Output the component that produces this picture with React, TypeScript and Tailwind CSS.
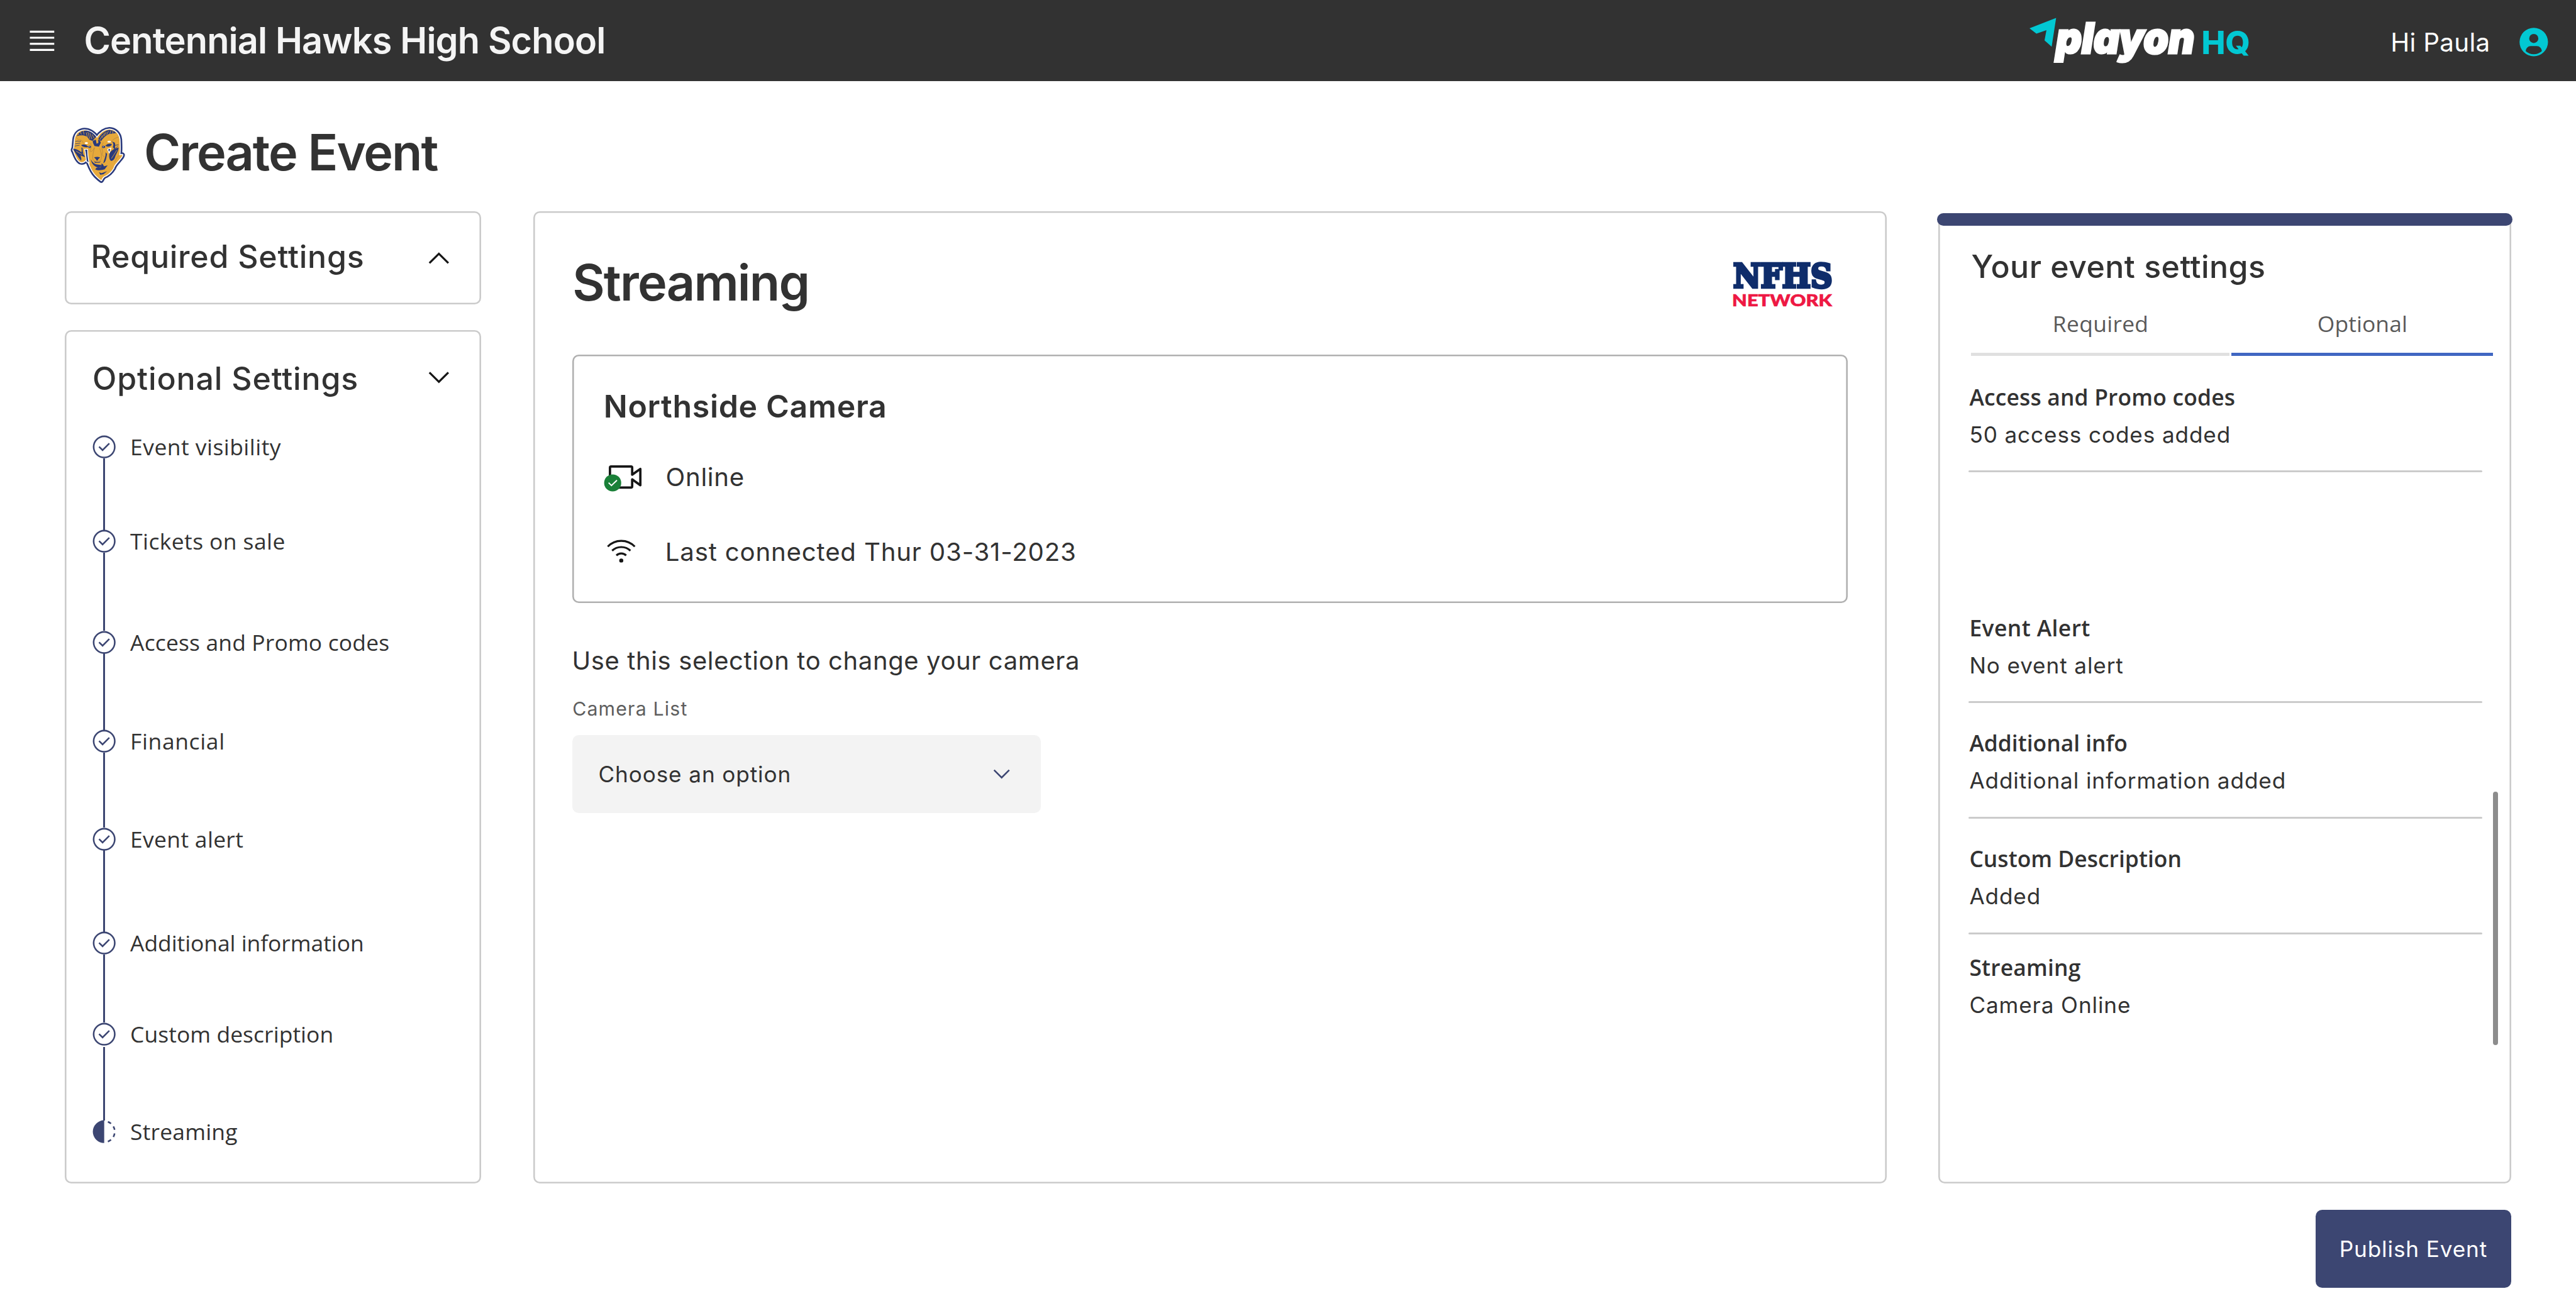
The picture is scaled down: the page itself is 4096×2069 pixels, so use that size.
import type { ReactNode } from 'react';

const INTER = "font-['Inter',sans-serif]";
const OPEN = "font-['Open_Sans',sans-serif]";

function Icon({ className, children }: { className: string; children: ReactNode }) {
  return (
    <svg viewBox="0 0 32 32" fill="currentColor" className={`shrink-0 ${className}`} aria-hidden="true">
      {children}
    </svg>
  );
}

const MenuIcon = () => (
  <Icon className="size-5 text-white">
    <path d="M4 6h24v2H4zM4 12h24v2H4zM4 18h24v2H4zM4 24h24v2H4z" />
  </Icon>
);

const ChevronDown = ({ className }: { className: string }) => (
  <Icon className={className}>
    <path d="M16 22L6 12 7.4 10.6 16 19.2 24.6 10.6 26 12z" />
  </Icon>
);

const ChevronUp = ({ className }: { className: string }) => (
  <Icon className={className}>
    <path d="M16 10L26 20 24.6 21.4 16 12.8 7.4 21.4 6 20z" />
  </Icon>
);

const AvatarIcon = () => (
  <Icon className="size-5 text-[#02c8d3]">
    <path
      fillRule="evenodd"
      d="M16 2a14 14 0 1 0 0 28a14 14 0 0 0 0-28zM16 8a4.5 4.5 0 1 1 0 9a4.5 4.5 0 0 1 0-9zM8.007 24.93A4.996 4.996 0 0 1 13 20h6a4.996 4.996 0 0 1 4.993 4.93a11.94 11.94 0 0 1-15.986 0z"
    />
  </Icon>
);

const CheckOutline = () => (
  <Icon className="size-4 text-[#3c4672]">
    <path d="M14 21.414L9 16.413 10.413 15 14 18.586 21.585 11 23 12.415z" />
    <path d="M16 2a14 14 0 1 0 14 14A14 14 0 0 0 16 2zm0 26a12 12 0 1 1 12-12a12 12 0 0 1-12 12z" />
  </Icon>
);

const Incomplete = () => (
  <Icon className="size-4 text-[#3c4672]">
    <path d="M23.764 6.859l1.285-1.531a13.976 13.976 0 0 0-4.182-2.441l-.683 1.878a11.973 11.973 0 0 1 3.58 2.094zM27.81 14l1.968-.413a13.889 13.889 0 0 0-1.638-4.541L26.409 10a12.52 12.52 0 0 1 1.401 4zM20.184 27.235l.683 1.878a13.976 13.976 0 0 0 4.182-2.441l-1.285-1.531a11.973 11.973 0 0 1-3.58 2.094zM26.409 22L28.14 23a14.139 14.139 0 0 0 1.638-4.587l-1.968-.347A12.152 12.152 0 0 1 26.409 22zM16 30V2a14 14 0 0 0 0 28z" />
  </Icon>
);

const WifiIcon = () => (
  <Icon className="ml-px size-5 text-[#161616]">
    <circle cx="16" cy="25" r="2" />
    <g fill="none" stroke="currentColor" strokeWidth="2">
      <path d="M2.7 11.3a18.4 18.4 0 0 1 26.6 0" />
      <path d="M7 15.3a13.2 13.2 0 0 1 18 0" />
      <path d="M11.2 20a6.9 6.9 0 0 1 9.6 0" />
    </g>
  </Icon>
);

const CameraOnlineIcon = () => (
  <svg viewBox="0 0 100 96" className="h-6 w-[25px] shrink-0" aria-hidden="true">
    <g transform="translate(8.2 7.6) scale(2.875)">
      <path
        fill="#161616"
        d="M21 26H4a2 2 0 0 1-2-2V8a2 2 0 0 1 2-2h17a2 2 0 0 1 2 2v4.06l5.42-3.87A1 1 0 0 1 30 9v14a1 1 0 0 1-1.58.81L23 19.94V24a2 2 0 0 1-2 2zM4 24h17v-6a1 1 0 0 1 1.58-.81L28 21.06V10.94l-5.42 3.87A1 1 0 0 1 21 14V8H4z"
      />
    </g>
    <circle cx="23.5" cy="68" r="21" fill="#1a8038" />
    <path d="M13.5 67.5L20.5 74.5L34 61.5" fill="none" stroke="#fff" strokeWidth="3.2" />
  </svg>
);

const PlayonLogo = () => (
  <svg viewBox="0 0 544 128" className="h-8 w-[136px] shrink-0 overflow-visible">
    <path d="M0 29.3L65.5 4L54.5 74.5L37 59.3L41.7 34L17 42.7z" fill="#02c8d3" />
    <text
      x="65"
      y="92"
      fill="#fff"
      stroke="#fff"
      strokeWidth="5"
      fontFamily="Inter"
      fontWeight="900"
      fontStyle="italic"
      fontSize="105"
      textLength="341"
      lengthAdjust="spacingAndGlyphs"
      className="[font-feature-settings:'cv11']"
    >
      playon
    </text>
    <text
      x="423"
      y="92.7"
      fill="#02c8d3"
      fontFamily="Inter"
      fontWeight="800"
      fontSize="78"
      textLength="120"
      lengthAdjust="spacingAndGlyphs"
    >
      HQ
    </text>
  </svg>
);

const NfhsLogo = () => (
  <svg viewBox="0 0 248 116" className="mt-[2.2px] mr-[9px] h-[29px] w-[62px] shrink-0 overflow-visible">
    <text
      x="3"
      y="66"
      fill="#0f2d6b"
      stroke="#0f2d6b"
      strokeWidth="7"
      fontFamily="DejaVu Serif"
      fontWeight="700"
      fontSize="82"
      textLength="244"
      lengthAdjust="spacingAndGlyphs"
    >
      NFHS
    </text>
    <text
      x="0"
      y="113"
      fill="#ee1843"
      stroke="#ee1843"
      strokeWidth="1"
      fontFamily="Lato"
      fontWeight="900"
      fontSize="42"
      textLength="246"
      lengthAdjust="spacingAndGlyphs"
    >
      NETWORK
    </text>
  </svg>
);

const HEAD =
  'M293 178C270 145 240 122 200 122C160 125 135 150 130 190C128 215 126 235 124 255C117 262 118 270 124 278C135 310 150 345 170 355C190 362 205 350 210 340C222 345 228 350 232 360C245 395 260 430 285 455C305 475 318 485 325 490C330 480 335 470 345 462C375 450 400 425 415 400C420 375 450 350 465 330C475 318 482 308 480 303L457 305C465 280 462 230 460 190C455 145 425 118 385 116C345 118 315 145 293 178z';

const RamLogo = () => (
  <svg viewBox="0 0 600 570" className="h-[47.5px] w-[50px] shrink-0" strokeLinejoin="round">
    <path d={HEAD} fill="#2a3a7c" stroke="#2a3a7c" strokeWidth="38" />
    <path d={HEAD} fill="#e7a93b" stroke="#fff" strokeWidth="14" />
    <path d={HEAD} fill="#e7a93b" />
    <path d="M202 262L224 262C224 290 226 320 236 365L216 352C212 330 210 290 202 262z" fill="#2a3a7c" stroke="#fff" strokeWidth="6" />
    <path d="M372 262L397 252L384 290z" fill="#2a3a7c" stroke="#fff" strokeWidth="6" />
    <g fill="#2a3a7c">
      <path d="M145 165C160 128 205 115 240 130C262 140 278 155 288 170L260 200L236 190C225 162 190 150 145 165z" />
      <path d="M303 185C325 145 360 120 385 120C410 122 425 130 434 143L380 150C350 165 335 185 324 202z" />
      <path d="M285 190L262 200L264 215L275 238L308 242L322 212L312 192L302 190L304 215L290 220z" />
      <path d="M176 232C195 220 218 226 230 246C210 248 190 246 176 232z" />
      <path d="M354 236C370 220 392 216 404 226C392 244 372 247 354 236z" />
      <ellipse cx="239" cy="244" rx="10" ry="9" />
      <ellipse cx="342" cy="244" rx="12" ry="9" />
      <path d="M118 258C150 258 188 285 205 318C192 318 182 310 172 306C176 322 180 335 178 342C160 325 140 300 118 262z" />
      <path d="M386 292C398 264 432 256 453 248C452 275 436 292 428 315C424 335 408 348 398 348C383 338 381 312 386 292z" />
      <path d="M272 321C285 317 305 317 316 323L301 337L299 345L290 345L287 336z" />
      <path d="M270 350C285 358 308 358 324 350L312 361L280 362z" />
      <path d="M248 335C258 358 272 366 286 372L326 378L324 392L290 398L280 410C300 422 332 416 350 410L372 380L345 388L338 374L328 366L322 396L300 396C278 390 252 372 248 335z" />
      <path d="M308 430L326 438L368 424L342 446L318 450z" />
      <path d="M356 284C362 310 346 336 340 364C358 358 362 330 368 296z" />
      <path d="M186 250C190 268 186 280 194 296L178 286C182 272 180 262 178 250z" />
      <path d="M398 202C415 212 418 228 410 246L428 268C424 246 432 228 424 212z" />
    </g>
    <g fill="none" stroke="#e7a93b" strokeWidth="4">
      <path d="M160 158L152 142M178 152L170 132M198 152L192 124M222 172L214 138M240 184L226 134M256 186L240 142M272 180L258 152M316 190L332 160M330 178L350 140M346 164L362 134M364 154L378 128M388 148L396 124M408 146L412 126" />
      <path d="M140 276L182 300M400 330L440 268" />
    </g>
    <g fill="none" stroke="#2a3a7c" strokeWidth="4">
      <path d="M134 205C150 196 160 205 175 202M130 238L165 232M132 222L170 216M418 235L452 228M420 262L448 240M145 300L175 345" />
    </g>
    <g fill="none" stroke="#8a6a45" strokeWidth="2">
      <path d="M275 250C268 275 262 300 262 325C262 345 275 352 292 350C312 352 325 345 326 325C328 300 322 275 312 255M245 215C255 240 250 262 240 275C248 285 262 275 275 250M340 210C325 240 330 262 336 280L330 300L348 320M138 168C142 200 190 180 192 220M400 205C420 180 440 175 452 172M457 305C440 320 430 340 425 355" />
    </g>
    <ellipse cx="215" cy="216" rx="12" ry="7" fill="#fff" />
    <ellipse cx="383" cy="205" rx="13" ry="7" fill="#fff" />
    <circle cx="237" cy="243" r="3" fill="#fff" />
    <circle cx="340" cy="243" r="3" fill="#fff" />
  </svg>
);

const steps = [
  { label: 'Event visibility', height: 'h-[58px]', tracking: 'tracking-[0.19px]' },
  { label: 'Tickets on sale', height: 'h-[62px]', tracking: 'tracking-[0.167px]' },
  { label: 'Access and Promo codes', height: 'h-[61px]', tracking: 'tracking-[0.066px]' },
  { label: 'Financial', height: 'h-[60px]', tracking: 'tracking-[0.25px]' },
  { label: 'Event alert', height: 'h-[64px]', tracking: 'tracking-[0.13px]' },
  { label: 'Additional information', height: 'h-[56px]', tracking: 'tracking-[-0.016px]' },
  { label: 'Custom description', height: 'h-[60px]', tracking: 'tracking-[0.03px]' },
  { label: 'Streaming', height: 'h-4', tracking: 'tracking-[0.08px]' },
];

const summary = [
  { title: 'Access and Promo codes', value: '50 access codes added', gap: 'mt-[15.3px]', tracking: 'tracking-[0.065px]' },
  { title: 'Event Alert', value: 'No event alert', gap: 'mt-[85.6px]', tracking: 'tracking-[0.163px]' },
  { title: 'Additional info', value: 'Additional information added', gap: 'mt-[14.7px]', tracking: 'tracking-[-0.005px]' },
  { title: 'Custom Description', value: 'Added', gap: 'mt-[14.9px]', tracking: 'tracking-[0.01px]' },
  { title: 'Streaming', value: 'Camera Online', gap: 'mt-[10.5px]', tracking: 'tracking-[0.072px]' },
];

function Header() {
  return (
    <header className="flex h-[50px] items-center justify-between bg-[#323232] px-4">
      <div className="flex items-center gap-[15.6px]">
        <MenuIcon />
        <span className="text-[22.3px] font-semibold tracking-[-0.335px] text-[#f4f4f4]">
          Centennial Hawks High School
        </span>
      </div>
      <div className="flex items-center">
        <div className="mr-[86px] pt-0.5">
          <PlayonLogo />
        </div>
        <span className="w-[78px] pt-[2.8px] text-[15.6px] tracking-[0.12px] text-white">Hi Paula</span>
        <div className="pt-0.5">
          <AvatarIcon />
        </div>
      </div>
    </header>
  );
}

function Sidebar() {
  return (
    <aside className="flex w-64 flex-col gap-4">
      <section className="flex h-[57px] items-start justify-between rounded pt-[18px] pr-4 pl-[15.9px] ring-1 ring-[#cbcbcb] ring-inset">
        <h2 className="text-[19.35px] leading-5 font-medium tracking-[0.3px]">Required Settings</h2>
        <ChevronUp className="mt-px size-5 text-[#161616]" />
      </section>
      <section className="h-[525px] rounded px-4 pt-5 ring-1 ring-[#cbcbcb] ring-inset">
        <div className="flex items-start justify-between">
          <h2 className="pl-[0.9px] text-[19.35px] leading-5 font-medium tracking-[0.33px]">Optional Settings</h2>
          <ChevronDown className="-mt-px size-5 text-[#161616]" />
        </div>
        <ol className={`mt-6 ${OPEN}`}>
          {steps.map((s, i) => {
            const last = i === steps.length - 1;
            return (
              <li key={s.label} className={`flex gap-[8.1px] ${s.height}`}>
                <div className="flex w-4 flex-col items-center">
                  {last ? <Incomplete /> : <CheckOutline />}
                  {!last && (
                    <div className={`-mb-px w-px flex-1 bg-[#3c4672] ${i === steps.length - 2 ? '' : '-mt-px'}`} />
                  )}
                </div>
                <span className={`text-[13.7px] leading-4 ${s.tracking}`}>{s.label}</span>
              </li>
            );
          })}
        </ol>
      </section>
    </aside>
  );
}

function StreamingPanel() {
  return (
    <main className="h-[598px] w-[832px] rounded px-6 ring-1 ring-[#cbcbcb] ring-inset">
      <div className="flex h-[88px] items-start justify-between pt-[27.8px]">
        <h2 className="text-[30.6px] leading-8 font-semibold tracking-[-0.68px]">Streaming</h2>
        <NfhsLogo />
      </div>
      <section className="h-[153px] rounded pt-5 pl-[19px] ring-1 ring-[#b0b0b0] ring-inset">
        <h3 className="pl-[0.2px] text-[19.35px] leading-6 font-semibold tracking-[0.26px]">Northside Camera</h3>
        <div className="mt-[18px] flex h-6">
          <CameraOnlineIcon />
          <span className="ml-[13.4px] text-[15.55px] leading-[27px] tracking-[0.266px]">Online</span>
        </div>
        <div className="mt-[25.1px] flex h-5 items-center">
          <WifiIcon />
          <span className="ml-[17.1px] pt-[0.6px] text-[15.55px] leading-5 tracking-[0.31px]">
            Last connected Thur 03-31-2023
          </span>
        </div>
      </section>
      <p className="mt-[23.6px] -ml-[0.3px] text-[15.45px] leading-6 tracking-[0.25px]">
        Use this selection to change your camera
      </p>
      <label className="mt-[9.5px] block text-[11.7px] leading-4 tracking-[0.457px] text-[#5e5e5e]">Camera List</label>
      <div className="mt-[7.9px] flex h-12 w-72 items-center justify-between rounded bg-[#f3f3f3] px-4">
        <span className="pt-[0.6px] text-[13.6px] tracking-[0.34px]">Choose an option</span>
        <ChevronDown className="size-4 text-[#3c4672]" />
      </div>
    </main>
  );
}

function SummaryPanel() {
  return (
    <aside className="mt-px h-[597px] w-[352px] rounded ring-1 ring-[#cbcbcb] ring-inset">
      <div className="-mx-px h-2 rounded bg-[#3c4672]" />
      <h2 className="mt-[13.1px] pl-[20.2px] text-[19.35px] leading-6 font-medium tracking-[0.182px]">
        Your event settings
      </h2>
      <div className={`mt-[14.8px] flex gap-px pl-5 text-center text-[13.7px] leading-4 text-[#5a5a5a] ${OPEN}`}>
        <div className="w-[159px] border-b-2 border-[#e0e0e0] pb-[10.1px] pl-[0.4px] tracking-[0.117px]">Required</div>
        <div className="w-[161px] border-b-2 border-[#4067c2] pb-[10.1px] pl-[0.4px] tracking-[0.041px]">Optional</div>
      </div>
      <div className="flex pl-[18.5px]">
        <div className="w-[316px]">
          {summary.map((s, i) => (
            <div key={s.title} className={s.gap}>
              <h3 className={`pl-[0.5px] text-[13.7px] leading-5 font-semibold ${s.tracking} ${OPEN}`}>{s.title}</h3>
              <p className="mt-[3.2px] pl-[0.5px] text-[13.6px] leading-5 tracking-[0.34px]">{s.value}</p>
              {i < summary.length - 1 && <div className="mt-3 h-[1.1px] rounded-full bg-[#cbcbcb]" />}
            </div>
          ))}
        </div>
        <div className="mt-[268px] ml-[6.6px] h-[156px] w-[2.8px] rounded-full bg-[#8d8d8d]" />
      </div>
    </aside>
  );
}

export default function App() {
  return (
    <div className={`h-[800px] w-[1584px] overflow-hidden bg-white text-[#323232] [zoom:2.58586] ${INTER}`}>
      <Header />
      <div className="mt-5 flex h-[47.5px] items-center gap-[3.6px] pl-[35px]">
        <RamLogo />
        <h1 className="text-[30.6px] leading-8 font-semibold tracking-[-0.79px]">Create Event</h1>
      </div>
      <div className="mt-[12.5px] flex gap-8 px-10">
        <Sidebar />
        <StreamingPanel />
        <SummaryPanel />
      </div>
      <div className="mt-4 flex justify-end px-10">
        <button className="h-12 w-[120px] rounded bg-[#3c4672] text-[13.6px] tracking-[0.341px] text-white">
          Publish Event
        </button>
      </div>
    </div>
  );
}
